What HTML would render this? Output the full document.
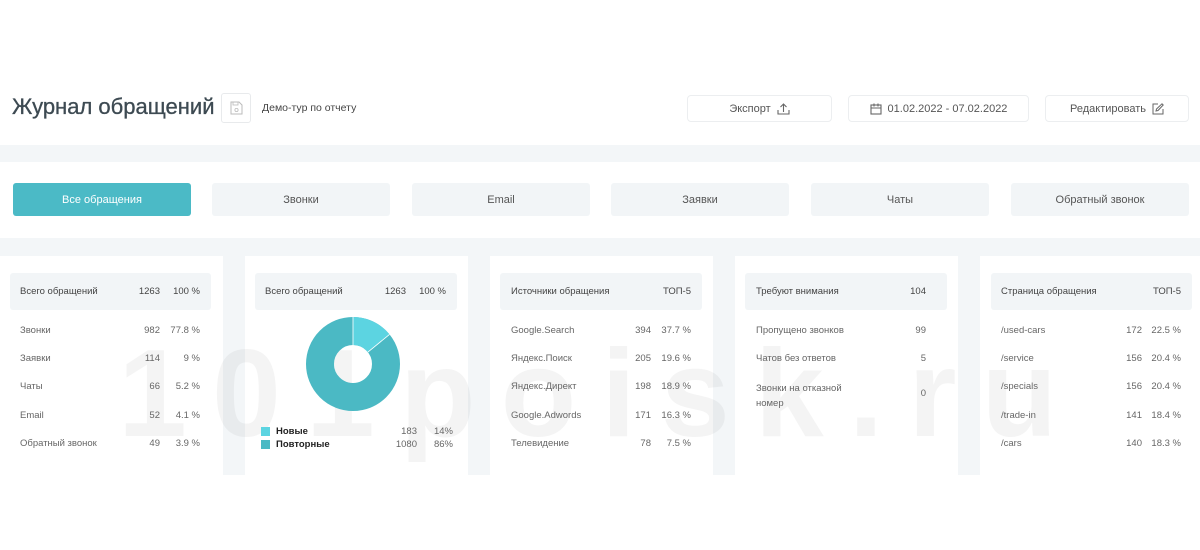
<!DOCTYPE html>
<html><head><meta charset="utf-8"><style>
*{margin:0;padding:0;box-sizing:border-box}
body{width:1200px;height:550px;background:#fff;font-family:"Liberation Sans",sans-serif;position:relative;overflow:hidden;color:#555}
.a{position:absolute}
.band{position:absolute;left:0;width:1200px;background:#f3f6f8}
.gap{position:absolute;top:256px;height:219px;width:22px;background:#f3f6f8}
.btn{position:absolute;top:95px;height:27px;border:1px solid #eceef0;border-radius:4px;font-size:11px;color:#555;display:flex;align-items:center;justify-content:center;gap:6px;background:#fff}
.tab{position:absolute;top:183px;height:33px;width:178px;background:#f2f5f7;border-radius:3px;font-size:11px;color:#555;display:flex;align-items:center;justify-content:center}
.hd{position:absolute;top:273px;height:37px;background:#f2f5f7;border-radius:3px;font-size:9.5px;color:#444}
.t{position:absolute;font-size:9.5px;color:#666;white-space:nowrap}
.r{text-align:right}
</style></head><body>
<div class="band" style="top:145px;height:17px"></div>
<div class="band" style="top:238px;height:18px"></div>
<div class="gap" style="left:223px"></div>
<div class="gap" style="left:468px"></div>
<div class="gap" style="left:713px"></div>
<div class="gap" style="left:958px"></div>
<div class="a" style="left:118px;top:332px;font-size:124px;font-weight:bold;color:rgba(0,0,0,0.045);letter-spacing:25px;line-height:1">101poisk.ru</div>

<div class="a" style="left:12px;top:94px;font-size:22px;color:#3d4a52;-webkit-text-stroke:0.3px #3d4a52">Журнал обращений</div>
<div class="a" style="left:221px;top:93px;width:30px;height:30px;border:1px solid #e8eaec;border-radius:3px">
<svg width="28" height="28" viewBox="0 0 28 28"><path d="M9 8h8l3 3v9H9z" fill="none" stroke="#bbb" stroke-width="1"/><rect x="11" y="8" width="5" height="3" fill="none" stroke="#bbb" stroke-width=".8"/><circle cx="14.5" cy="16" r="1.6" fill="none" stroke="#bbb" stroke-width=".8"/></svg></div>
<div class="a" style="left:262px;top:102px;font-size:10.5px;color:#444">Демо-тур по отчету</div>

<div class="btn" style="left:687px;width:145px">Экспорт <svg width="13" height="12" viewBox="0 0 13 12"><path d="M1 7v4h11V7M6.5 9V1M3.5 4l3-3 3 3" fill="none" stroke="#666" stroke-width="1.1"/></svg></div>
<div class="btn" style="left:848px;width:181px"><svg width="12" height="12" viewBox="0 0 12 12"><rect x="1" y="2" width="10" height="9" fill="none" stroke="#666" stroke-width="1.1"/><path d="M1 5h10M4 0.5v3M8 0.5v3" stroke="#666" stroke-width="1.1"/></svg> 01.02.2022 - 07.02.2022</div>
<div class="btn" style="left:1045px;width:144px">Редактировать <svg width="12" height="12" viewBox="0 0 12 12"><path d="M6 1H1v10h10V6M4 8l.5-2L10 .8l1.2 1.2L6 7.5z" fill="none" stroke="#666" stroke-width="1"/></svg></div>

<div class="tab" style="left:13px;background:#4bbac6;color:#fff">Все обращения</div>
<div class="tab" style="left:212px">Звонки</div>
<div class="tab" style="left:412px">Email</div>
<div class="tab" style="left:611px">Заявки</div>
<div class="tab" style="left:811px">Чаты</div>
<div class="tab" style="left:1011px">Обратный звонок</div>

<div class="hd" style="left:10px;width:201px"></div>
<div class="t" style="left:20px;top:286px;color:#444">Всего обращений</div>
<div class="t r" style="left:130px;width:30px;top:286px;color:#444">1263</div>
<div class="t r" style="left:165px;width:35px;top:286px;color:#444">100 %</div>
<div class="t" style="left:20px;top:325px">Звонки</div><div class="t r" style="left:130px;width:30px;top:325px">982</div><div class="t r" style="left:165px;width:35px;top:325px">77.8 %</div>
<div class="t" style="left:20px;top:353px">Заявки</div><div class="t r" style="left:130px;width:30px;top:353px">114</div><div class="t r" style="left:165px;width:35px;top:353px">9 %</div>
<div class="t" style="left:20px;top:381px">Чаты</div><div class="t r" style="left:130px;width:30px;top:381px">66</div><div class="t r" style="left:165px;width:35px;top:381px">5.2 %</div>
<div class="t" style="left:20px;top:410px">Email</div><div class="t r" style="left:130px;width:30px;top:410px">52</div><div class="t r" style="left:165px;width:35px;top:410px">4.1 %</div>
<div class="t" style="left:20px;top:438px">Обратный звонок</div><div class="t r" style="left:130px;width:30px;top:438px">49</div><div class="t r" style="left:165px;width:35px;top:438px">3.9 %</div>

<div class="hd" style="left:255px;width:202px"></div>
<div class="t" style="left:265px;top:286px;color:#444">Всего обращений</div>
<div class="t r" style="left:376px;width:30px;top:286px;color:#444">1263</div>
<div class="t r" style="left:411px;width:35px;top:286px;color:#444">100 %</div>
<svg class="a" style="left:305px;top:316px" width="96" height="96" viewBox="0 0 96 96">
<circle cx="48" cy="48" r="33" fill="none" stroke="#4bb9c4" stroke-width="28"/>
<path d="M48 1A47 47 0 0 1 84.5 18.4L62.8 36.2A19 19 0 0 0 48 29z" fill="#5cd4e1"/>
<line x1="48" y1="1" x2="48" y2="29" stroke="#fff" stroke-width="0.8"/>
<line x1="84.5" y1="18.4" x2="62.8" y2="36.2" stroke="#fff" stroke-width="0.8"/>
</svg>
<div class="a" style="left:261px;top:427px;width:9px;height:9px;background:#5cd4e1"></div>
<div class="a" style="left:261px;top:440px;width:9px;height:9px;background:#4bb9c4"></div>
<div class="t" style="left:276px;top:426px;color:#222;font-weight:bold">Новые</div>
<div class="t" style="left:276px;top:439px;color:#222;font-weight:bold">Повторные</div>
<div class="t r" style="left:385px;width:32px;top:426px">183</div><div class="t r" style="left:425px;width:28px;top:426px">14%</div>
<div class="t r" style="left:385px;width:32px;top:439px">1080</div><div class="t r" style="left:425px;width:28px;top:439px">86%</div>

<div class="hd" style="left:500px;width:202px"></div>
<div class="t" style="left:511px;top:286px;color:#444">Источники обращения</div>
<div class="t r" style="left:640px;width:51px;top:286px;color:#444">ТОП-5</div>
<div class="t" style="left:511px;top:325px">Google.Search</div><div class="t r" style="left:620px;width:31px;top:325px">394</div><div class="t r" style="left:656px;width:35px;top:325px">37.7 %</div>
<div class="t" style="left:511px;top:353px">Яндекс.Поиск</div><div class="t r" style="left:620px;width:31px;top:353px">205</div><div class="t r" style="left:656px;width:35px;top:353px">19.6 %</div>
<div class="t" style="left:511px;top:381px">Яндекс.Директ</div><div class="t r" style="left:620px;width:31px;top:381px">198</div><div class="t r" style="left:656px;width:35px;top:381px">18.9 %</div>
<div class="t" style="left:511px;top:410px">Google.Adwords</div><div class="t r" style="left:620px;width:31px;top:410px">171</div><div class="t r" style="left:656px;width:35px;top:410px">16.3 %</div>
<div class="t" style="left:511px;top:438px">Телевидение</div><div class="t r" style="left:620px;width:31px;top:438px">78</div><div class="t r" style="left:656px;width:35px;top:438px">7.5 %</div>

<div class="hd" style="left:745px;width:202px"></div>
<div class="t" style="left:756px;top:286px;color:#444">Требуют внимания</div>
<div class="t r" style="left:890px;width:36px;top:286px;color:#444">104</div>
<div class="t" style="left:756px;top:325px">Пропущено звонков</div><div class="t r" style="left:890px;width:36px;top:325px">99</div>
<div class="t" style="left:756px;top:353px">Чатов без ответов</div><div class="t r" style="left:890px;width:36px;top:353px">5</div>
<div class="t" style="left:756px;top:381px;line-height:15px">Звонки на отказной<br>номер</div><div class="t r" style="left:890px;width:36px;top:388px">0</div>

<div class="hd" style="left:991px;width:201px"></div>
<div class="t" style="left:1001px;top:286px;color:#444">Страница обращения</div>
<div class="t r" style="left:1140px;width:41px;top:286px;color:#444">ТОП-5</div>
<div class="t" style="left:1001px;top:325px">/used-cars</div><div class="t r" style="left:1110px;width:32px;top:325px">172</div><div class="t r" style="left:1146px;width:35px;top:325px">22.5 %</div>
<div class="t" style="left:1001px;top:353px">/service</div><div class="t r" style="left:1110px;width:32px;top:353px">156</div><div class="t r" style="left:1146px;width:35px;top:353px">20.4 %</div>
<div class="t" style="left:1001px;top:381px">/specials</div><div class="t r" style="left:1110px;width:32px;top:381px">156</div><div class="t r" style="left:1146px;width:35px;top:381px">20.4 %</div>
<div class="t" style="left:1001px;top:410px">/trade-in</div><div class="t r" style="left:1110px;width:32px;top:410px">141</div><div class="t r" style="left:1146px;width:35px;top:410px">18.4 %</div>
<div class="t" style="left:1001px;top:438px">/cars</div><div class="t r" style="left:1110px;width:32px;top:438px">140</div><div class="t r" style="left:1146px;width:35px;top:438px">18.3 %</div>
</body></html>
